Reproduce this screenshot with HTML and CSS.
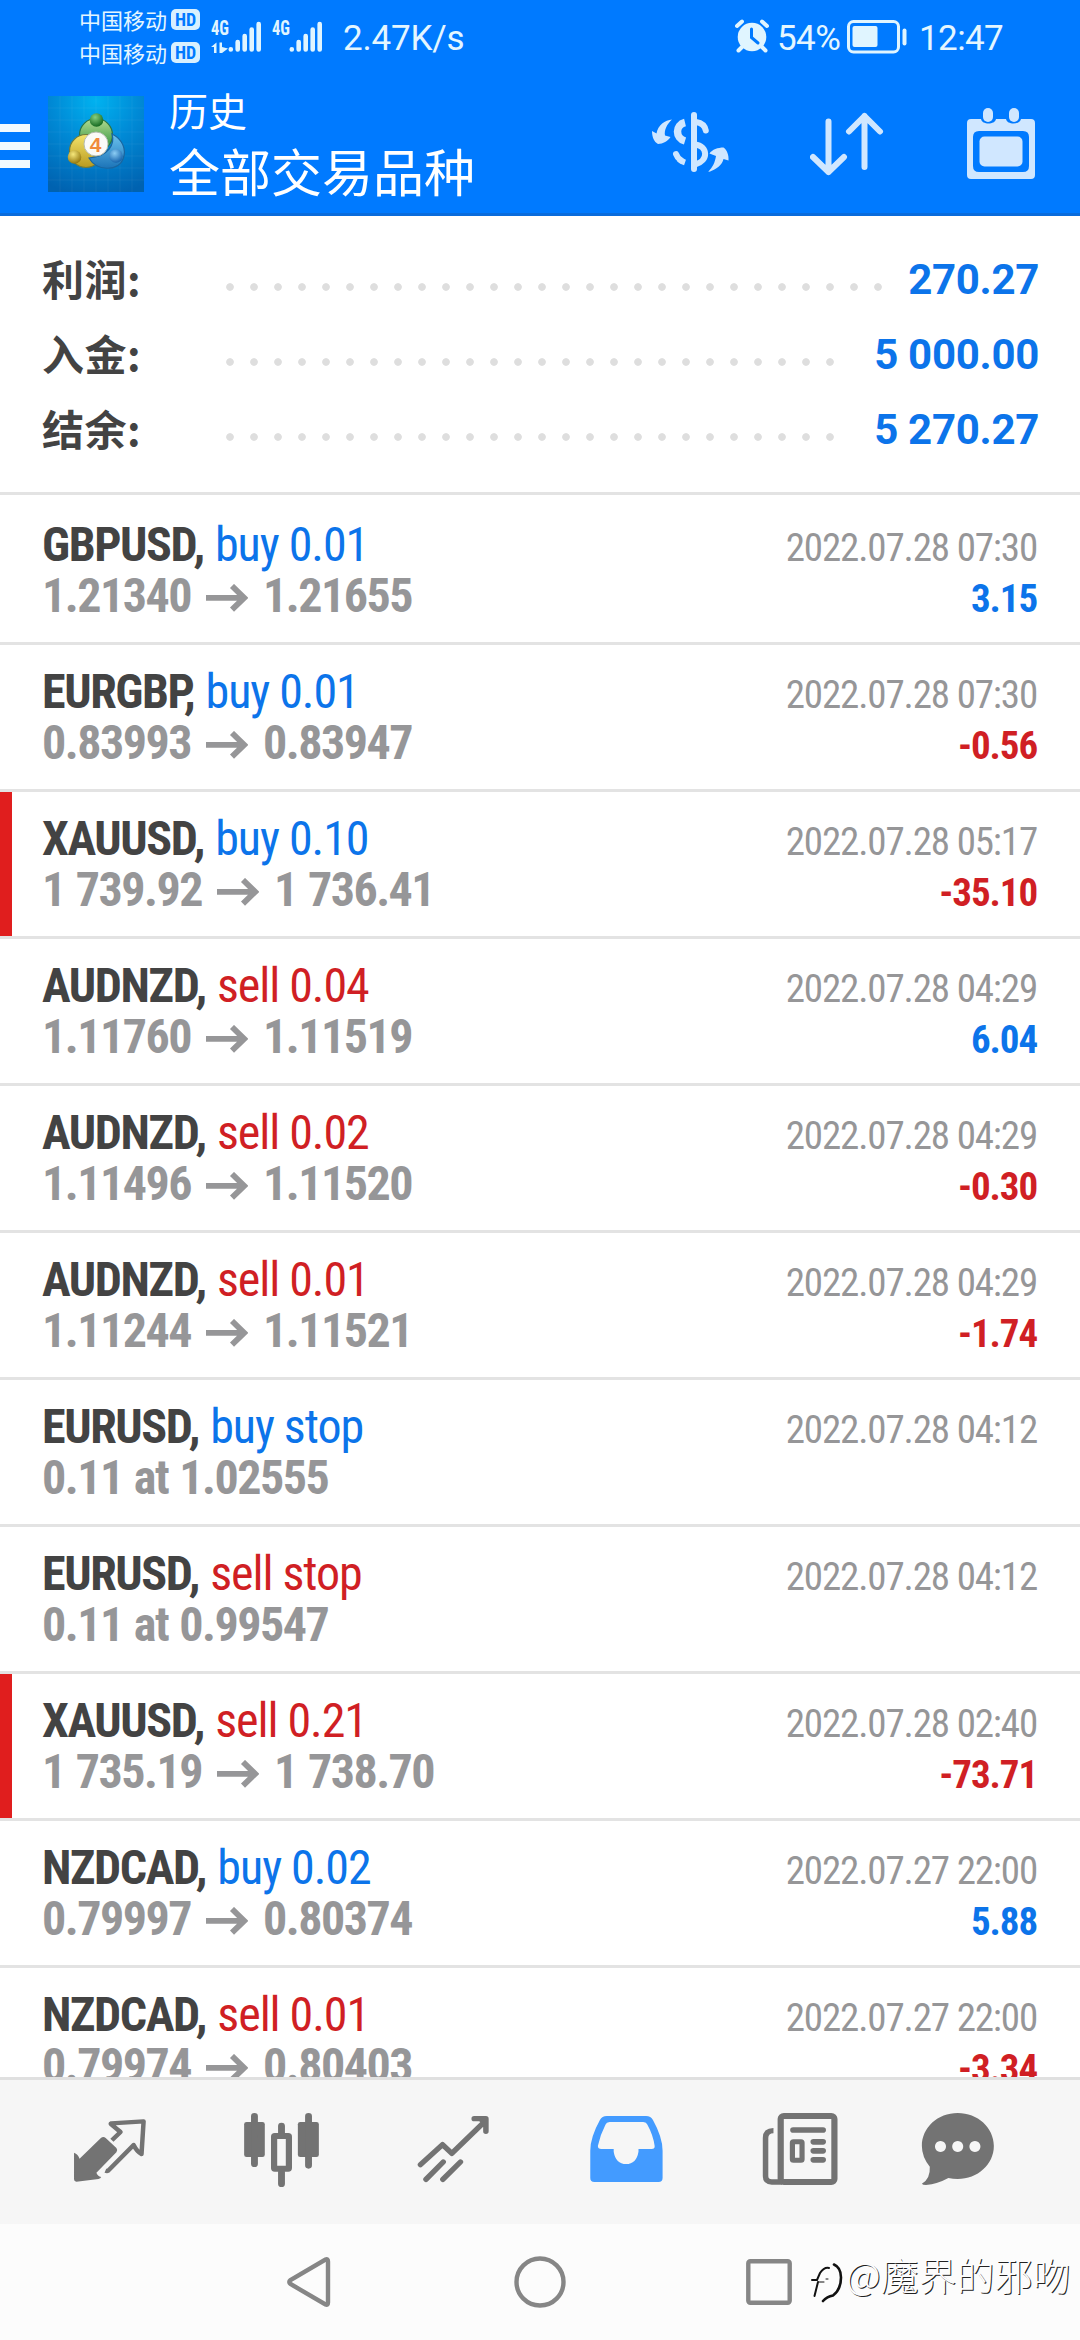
FILE: index.html
```
<!DOCTYPE html>
<html lang="zh-CN">
<head>
<meta charset="utf-8">
<title>历史</title>
<link rel="stylesheet" href="styles.css">
</head>
<body>
<div class="screen">
  <header class="top">
    <div class="status">
      <div class="carriers">
        <div class="carrier">中国移动<span class="hd">HD</span></div>
        <div class="carrier">中国移动<span class="hd">HD</span></div>
      </div>
      <svg class="signal" width="54" height="36" viewBox="0 0 54 36">
        <text class="net" x="0" y="17" textLength="18" lengthAdjust="spacingAndGlyphs">4G</text>
        <path class="fill" d="M0 29l5.500-4.500V35h-2.500v-6zM8.500 24.500H11V29l6 1.500-6 4.500H8.500z"/>
        <path class="bars" d="M19.800 31.500v-.200M26.700 31.500v-7.500M33.700 31.500V18M40.700 31.500V11.500M47.700 31.500V6"/>
      </svg>
      <svg class="signal" width="54" height="36" viewBox="0 0 54 36">
        <text class="net" x="0" y="17" textLength="18" lengthAdjust="spacingAndGlyphs">4G</text>
        <path class="bars" d="M19.800 31.500v-.200M26.700 31.500v-7.500M33.700 31.500V18M40.700 31.500V11.500M47.700 31.500V6"/>
      </svg>
      <span class="speed">2.47K/s</span>
      <svg class="alarm" width="34" height="34" viewBox="0 0 34 34">
        <circle class="fill" cx="17" cy="18" r="14.300"/>
        <path class="ears" d="M2 7l5-4.500M32 7l-5-4.500M7 28l-3.500 3.500M27 28l3.500 3.500"/>
        <path class="hands" d="M16.500 10v8.500l6.500 5.500"/>
      </svg>
      <span class="battery-text">54%</span>
      <svg class="battery" width="60" height="34" viewBox="0 0 60 34">
        <rect class="case" x="1.500" y="1.500" width="50" height="30.500" rx="5"/>
        <rect class="fill" x="5.500" y="6" width="25" height="21" rx="2"/>
        <rect class="fill" x="55.500" y="8.500" width="4" height="17" rx="2"/>
      </svg>
      <span class="clock">12:47</span>
    </div>
    <div class="appbar">
      <div class="burger"><i></i><i></i><i></i></div>
      <svg class="logo" width="96" height="96" viewBox="0 0 96 96">
        <defs>
          <radialGradient id="sky" cx=".5" cy=".05" r="1"><stop offset="0" stop-color="#00b2f0"/><stop offset=".45" stop-color="#008ad6"/><stop offset="1" stop-color="#0062b0"/></radialGradient>
          <linearGradient id="green" x2="0" y2="1"><stop offset="0" stop-color="#b4dc92"/><stop offset="1" stop-color="#238a35"/></linearGradient>
          <linearGradient id="gold" x2="0" y2="1"><stop offset="0" stop-color="#f3e36b"/><stop offset="1" stop-color="#b99a1e"/></linearGradient>
          <linearGradient id="blue" x2="0" y2="1"><stop offset="0" stop-color="#6cc3ee"/><stop offset="1" stop-color="#1c74b8"/></linearGradient>
          <radialGradient id="gball" cx=".4" cy=".3" r=".7"><stop offset="0" stop-color="#86cf80"/><stop offset="1" stop-color="#14691f"/></radialGradient>
          <radialGradient id="yball" cx=".4" cy=".3" r=".7"><stop offset="0" stop-color="#f6e87c"/><stop offset="1" stop-color="#94780e"/></radialGradient>
          <radialGradient id="bball" cx=".4" cy=".3" r=".7"><stop offset="0" stop-color="#8ccdf4"/><stop offset="1" stop-color="#1664ad"/></radialGradient>
        </defs>
        <rect width="96" height="96" fill="url(#sky)"/>
        <path class="grid" d="M12 0v96M24 0v96M36 0v96M48 0v96M60 0v96M72 0v96M84 0v96M0 12h96M0 24h96M0 36h96M0 48h96M0 60h96M0 72h96M0 84h96"/>
        <circle cx="48" cy="39" r="16.500" fill="url(#green)" stroke="#2b7547" stroke-width="1.200"/>
        <circle cx="38" cy="55" r="16.500" fill="url(#gold)" stroke="#6f7b3c" stroke-width="1.200"/>
        <path d="M41 62C48 75 70 76 75 63c4-10-1-20-11-25 3 10-3 22-23 24z" fill="url(#blue)" stroke="#1a659f" stroke-width="1.200"/>
        <circle cx="48.500" cy="24" r="6.800" fill="url(#gball)"/>
        <circle cx="26.500" cy="61" r="6.800" fill="url(#yball)"/>
        <circle cx="68" cy="60" r="6.800" fill="url(#bball)"/>
        <circle cx="48" cy="48" r="12" fill="#fbfbf8" stroke="#b5bdb0"/>
        <text class="four" x="47.500" y="55.500" text-anchor="middle">4</text>
      </svg>
      <div class="titles">
        <div class="title">历史</div>
        <div class="subtitle">全部交易品种</div>
      </div>
      <svg class="ic-dollar" width="80" height="66" viewBox="0 0 80 66">
        <g class="tint">
          <path d="M21 8.500C14 9 7 14 5.500 22.500L1 20C1 26 3 31 7 33 12 33 17 30 19.500 26L14 24.500C13 19 16 13 21 8.500z"/>
          <path d="M57 61C66 58.500 71 54 72.500 48L77.500 49.500C78 44 76 39 72.500 36.500 67 36.500 61 38.500 58.500 42.500L65 45C64 51 62 56 57 61z"/>
        </g>
        <g class="tint-line">
          <path class="w6" d="M43 4v54"/>
          <path class="w6" d="M45 11c6 1 9 4 9.800 8.500"/>
          <path class="w8 butt" d="M34 11.500C24 14 24 27 34 30"/>
          <path class="w6 butt" d="M44 33.500c13 1.500 14 16.500 0 20"/>
          <path class="w6" d="M25 43c1 3 3 5 5 6.500"/>
          <path class="w6 butt" d="M28 48q3 2.500 6 3.500"/>
        </g>
      </svg>
      <svg class="ic-sort" width="74" height="64" viewBox="0 0 74 64">
        <path class="tint-line w6" d="M18.500 9.500V60M3 45l15.500 15L34 45M54.500 55V4M39 19.500L54.500 4 70 19.500"/>
      </svg>
      <svg class="ic-cal" width="68" height="72" viewBox="0 0 68 72">
        <path class="tint" fill-rule="evenodd" d="M4 11h10c1 6 14 6 15 0h10c1 6 14 6 15 0h10q4 0 4 4v52q0 4-4 4H4q-4 0-4-4V15q0-4 4-4zM12 23q-6 0-6 6v29q0 6 6 6h44q6 0 6-6V29q0-6-6-6z"/>
        <rect class="tint" x="12.500" y="28.500" width="43" height="30" rx="5"/>
        <rect class="tint" x="16" y="0" width="10" height="14" rx="5"/>
        <rect class="tint" x="42" y="0" width="10" height="14" rx="5"/>
      </svg>
    </div>
  </header>

  <section class="summary">
    <div class="sum"><span class="label">利润:</span><span class="dots d28"></span><span class="value">270.27</span></div>
    <div class="sum"><span class="label">入金:</span><span class="dots d26"></span><span class="value">5 000.00</span></div>
    <div class="sum"><span class="label">结余:</span><span class="dots d26"></span><span class="value">5 270.27</span></div>
  </section>

  <svg width="0" height="0" class="defs"><symbol id="arrow" viewBox="0 0 42 28"><path d="M0 13.800h38M26 2l12.200 11.800L26 25.600" fill="none" stroke="#969698" stroke-width="5.800"/></symbol></svg>

  <main class="list">
    <div class="deal"><div class="sym">GBPUSD, <span class="buy">buy 0.01</span></div><div class="date">2022.07.28 07:30</div><div class="price">1.21340<svg class="arrow"><use href="#arrow"/></svg>1.21655</div><div class="profit buy">3.15</div></div>
    <div class="deal"><div class="sym">EURGBP, <span class="buy">buy 0.01</span></div><div class="date">2022.07.28 07:30</div><div class="price">0.83993<svg class="arrow"><use href="#arrow"/></svg>0.83947</div><div class="profit sell">-0.56</div></div>
    <div class="deal flag"><div class="sym">XAUUSD, <span class="buy">buy 0.10</span></div><div class="date">2022.07.28 05:17</div><div class="price">1 739.92<svg class="arrow"><use href="#arrow"/></svg>1 736.41</div><div class="profit sell">-35.10</div></div>
    <div class="deal"><div class="sym">AUDNZD, <span class="sell">sell 0.04</span></div><div class="date">2022.07.28 04:29</div><div class="price">1.11760<svg class="arrow"><use href="#arrow"/></svg>1.11519</div><div class="profit buy">6.04</div></div>
    <div class="deal"><div class="sym">AUDNZD, <span class="sell">sell 0.02</span></div><div class="date">2022.07.28 04:29</div><div class="price">1.11496<svg class="arrow"><use href="#arrow"/></svg>1.11520</div><div class="profit sell">-0.30</div></div>
    <div class="deal"><div class="sym">AUDNZD, <span class="sell">sell 0.01</span></div><div class="date">2022.07.28 04:29</div><div class="price">1.11244<svg class="arrow"><use href="#arrow"/></svg>1.11521</div><div class="profit sell">-1.74</div></div>
    <div class="deal"><div class="sym">EURUSD, <span class="buy">buy stop</span></div><div class="date">2022.07.28 04:12</div><div class="price">0.11 at 1.02555</div></div>
    <div class="deal"><div class="sym">EURUSD, <span class="sell">sell stop</span></div><div class="date">2022.07.28 04:12</div><div class="price">0.11 at 0.99547</div></div>
    <div class="deal flag"><div class="sym">XAUUSD, <span class="sell">sell 0.21</span></div><div class="date">2022.07.28 02:40</div><div class="price">1 735.19<svg class="arrow"><use href="#arrow"/></svg>1 738.70</div><div class="profit sell">-73.71</div></div>
    <div class="deal"><div class="sym">NZDCAD, <span class="buy">buy 0.02</span></div><div class="date">2022.07.27 22:00</div><div class="price">0.79997<svg class="arrow"><use href="#arrow"/></svg>0.80374</div><div class="profit buy">5.88</div></div>
    <div class="deal"><div class="sym">NZDCAD, <span class="sell">sell 0.01</span></div><div class="date">2022.07.27 22:00</div><div class="price">0.79974<svg class="arrow"><use href="#arrow"/></svg>0.80403</div><div class="profit sell">-3.34</div></div>
  </main>

  <nav class="tabs">
    <svg viewBox="69.700 360 499.500 432" preserveAspectRatio="none">
      <path class="g" d="M215 578q12 4 16 18l62-62q7-6 14 0l31 30q5 6 0 13l-58 61q3 10 14 13-2 5-8 6l-64 8q-7 0-7-7z"/>
      <path class="gl" stroke-width="13" d="M325 541l25-25-27-23q-3-2 0-3l94-6-6 98q-14-8-23-27l-74 77q-3 2-8 0"/>
    </svg>
    <svg viewBox="569.200 360 499.500 432" preserveAspectRatio="none">
      <rect class="g" x="709" y="486" width="60" height="105" rx="7"/><rect class="g" x="865" y="486" width="61" height="105" rx="7"/>
      <rect class="gl" x="796" y="528" width="43" height="98" rx="2" stroke-width="18"/>
      <path class="gl round" stroke-width="20" d="M739 469v142M896 469v147M817.500 498v24M817.500 636v35"/>
    </svg>
    <svg viewBox="1068.600 360 499.500 432" preserveAspectRatio="none">
      <path class="gl round" stroke-width="16" d="M1221 614l64-60 27 26 96-96M1377 476h34v38M1237 658l50-52M1286 658l51-52"/>
      <path class="g" d="M1385 476h30v32z"/>
    </svg>
    <svg viewBox="0 360 499.500 432" preserveAspectRatio="none">
      <path class="active" fill-rule="evenodd" d="M194 468h114q14 0 20 12 28 52 28 92v82q0 12-12 12H158q-12 0-12-12v-82q0-40 28-92 6-12 20-12zM202 486q-9 0-12 8-16 32-22 64 0 9 10 9h36v8q6 37 36 37t36-37v-8h38q10 0 9-9-4-32-21-64-3-8-12-8z"/>
    </svg>
    <svg viewBox="499.500 360 499.500 432" preserveAspectRatio="none">
      <rect class="gl" x="699" y="468" width="156" height="198" rx="9" stroke-width="18"/>
      <path class="gl" stroke-width="16" d="M678 512q-23 0-23 22v114q0 18 18 18h30"/>
      <path class="gl round" stroke-width="17" d="M735 510h87M794 545.500h28M794 572.500h28M794 599.500h28"/>
      <rect class="gl" x="733" y="545" width="28" height="56" rx="3" stroke-width="15"/>
    </svg>
    <svg viewBox="999 360 499.500 432" preserveAspectRatio="none">
      <path class="g" fill-rule="evenodd" d="M1213 459c58 0 105 44 105 99s-47 99-105 99q-14 0-27-3-32 18-65 21-10 0-12-4 25-15 23-51-23-29-23-62c0-55 46-99 104-99zM1163 543a16 16.500 0 1 0 .1 0zM1213 543a16 16.500 0 1 0 .1 0zM1263 543a16 16.500 0 1 0 .1 0z"/>
    </svg>
  </nav>

  <footer class="sysnav">
    <svg class="back" width="46" height="52" viewBox="0 0 46 52"><path d="M38.500 3.500Q41 2.500 41 5.500v41Q41 49.500 38.500 48.500L3.500 28Q1 26 3.500 24z"/></svg>
    <svg class="home" width="52" height="52" viewBox="0 0 52 52"><circle cx="26" cy="26" r="23.500"/></svg>
    <svg class="recent" width="46" height="46" viewBox="0 0 46 46"><rect x="2.300" y="2.300" width="41.400" height="41.400" rx="2"/></svg>
  </footer>

  <div class="watermark">
    <svg width="34" height="42" viewBox="0 0 34 42">
      <path class="ink" stroke-width="2" d="M4.500 34L8 20M2 18h5l3-7q4-6 9-5"/>
      <path class="ink" stroke-width="2.600" d="M24 2.500q7 3 7 13 0 12-8 18-6 1-10 5.500"/>
      <path class="ink" stroke-width="1" d="M9 20h5M16 17h2"/>
    </svg>
    <span>@魔界的邪吻</span>
  </div>
</div>
</body>
</html>
```
FILE: styles.css
```
* { box-sizing: border-box; }
body { margin: 0; background: #fff; }
svg { display: block; flex: none; }
.defs { display: none; }

.screen {
  position: relative;
  display: flex;
  flex-direction: column;
  width: 1080px;
  height: 2340px;
  overflow: hidden;
  background: #fff;
  font-family: Roboto, "Noto Sans CJK SC", sans-serif;
}

/* Header */
.top {
  height: 216px;
  flex: none;
  background: #007aff;
  border-bottom: 3px solid #0a6cdc;
  color: #e4f6ff;
}
.status {
  display: flex;
  align-items: flex-start;
  height: 72px;
  padding-left: 79px;
}
.carriers {
  width: 132px;
  padding-top: 3px;
  font: 22px/33px "Noto Sans CJK SC", sans-serif;
}
.carrier { display: flex; align-items: center; height: 33px; }
.hd {
  width: 29px;
  height: 21px;
  margin-left: 4px;
  border-radius: 5px;
  background: #d8f0ff;
  color: #007aff;
  font: 700 18px/21px "Roboto Condensed", sans-serif;
  text-align: center;
}
.signal { width: 54px; margin: 18px 7px 0 0; }
.net { font: 700 20px "Roboto Condensed", sans-serif; fill: #e0f5ff; }
.fill { fill: #e0f5ff; }
.bars { stroke: #e0f5ff; stroke-width: 4.6; stroke-linecap: round; fill: none; }
.speed, .battery-text, .clock { font-size: 35px; line-height: 41px; margin-top: 18px; white-space: nowrap; }
.speed { width: 124px; margin-left: 10px; letter-spacing: -.2px; }
.alarm { margin: 19px 0 0 268px; }
.ears { stroke: #e0f5ff; stroke-width: 4; stroke-linecap: round; }
.hands { stroke: #007aff; stroke-width: 3; fill: none; stroke-linecap: round; }
.battery-text { width: 70px; margin-left: 8px; letter-spacing: -.6px; }
.battery { margin-top: 20px; }
.case { fill: none; stroke: #e0f5ff; stroke-width: 3; }
.clock { margin-left: 12px; letter-spacing: -.6px; }

.appbar { display: flex; height: 141px; }
.burger { display: flex; flex-direction: column; gap: 10px; width: 30px; padding-top: 52px; }
.burger i { height: 8px; background: #f2faff; }
.logo { margin: 24px 0 0 18px; }
.grid { stroke: #fff; stroke-opacity: .05; fill: none; }
.four { font: 700 21px "Liberation Sans", sans-serif; fill: #f08a3c; }
.titles { width: 306px; margin-left: 25px; color: #fff; font-family: "Noto Sans CJK SC", sans-serif; white-space: nowrap; }
.title { font-size: 39px; line-height: 50px; margin-top: 12px; }
.subtitle { font-size: 51px; line-height: 60px; margin-top: 6px; }
.tint { fill: #d0e7ff; }
.tint-line { fill: none; stroke: #d0e7ff; stroke-linecap: round; stroke-linejoin: round; }
.w6 { stroke-width: 6; }
.w8 { stroke-width: 7.5; }
.butt { stroke-linecap: butt; }
.ic-dollar { margin: 39px 0 0 176px; }
.ic-sort { margin: 40px 0 0 79px; }
.ic-cal { margin: 36px 0 0 83px; }

/* Account summary */
.summary {
  flex: none;
  height: 279px;
  padding: 27px 41px 0 42px;
  border-bottom: 3px solid #e3e3e3;
}
.sum { display: flex; align-items: center; height: 75px; font-weight: 700; font-size: 42px; line-height: 50px; }
.label { width: 184px; margin-top: -6px; color: #434343; font-family: "Noto Sans CJK SC", sans-serif; letter-spacing: .5px; }
.dots {
  height: 8px;
  margin-top: 13px;
  background: radial-gradient(circle at 4px 4px, #dedede 3.4px, transparent 4.2px) 0 0 / 24px 8px repeat-x;
}
.d28 { width: 656px; }
.d26 { width: 608px; }
.value { margin-left: auto; margin-top: -1px; color: #0c74ea; white-space: nowrap; letter-spacing: -.3px; }

/* Deals */
.list { flex: none; height: 1582px; padding-top: 3px; overflow: hidden; }
.deal {
  display: grid;
  grid-template-columns: 1fr auto;
  grid-template-rows: 51px 51px;
  align-items: baseline;
  height: 147px;
  padding: 21px 43px 0 42px;
  border-bottom: 3px solid #e3e3e3;
  font: 48px/51px "Roboto Condensed", Roboto, sans-serif;
  white-space: nowrap;
}
.flag { background: linear-gradient(#e01e1e, #e01e1e) 0 0 / 12px 100% no-repeat; }
.sym { color: #434343; font-weight: 700; letter-spacing: -1.4px; }
.sym span { margin-left: 1.5px; font-weight: 400; letter-spacing: -1.05px; }
.buy { color: #0c74ea; }
.sell { color: #d01f24; }
.date { color: #969698; font-size: 39px; letter-spacing: -1.15px; }
.price { color: #969698; font-weight: 700; letter-spacing: -1.5px; word-spacing: 1.5px; }
.arrow { display: inline-block; width: 42px; height: 28px; margin: 0 15px 0 15px; vertical-align: 0; }
.profit { font-size: 39px; font-weight: 700; text-align: right; letter-spacing: -1.1px; }

/* Tab bar */
.tabs {
  display: flex;
  flex: none;
  height: 147px;
  padding: 0 24px;
  border-top: 3px solid #e0e0e0;
  background: #f6f6f6;
}
.tabs svg { width: 172px; height: 144px; }
.g { fill: #737373; }
.gl { fill: none; stroke: #737373; stroke-linejoin: round; }
.round { stroke-linecap: round; }
.active { fill: #439bff; }

/* System navigation */
.sysnav { display: flex; flex: 1; padding: 32px 0 0 287px; background: #fcfcfc; fill: none; stroke: #868686; stroke-width: 4.4; }
.home { margin-left: 181px; }
.recent { margin: 3px 0 0 180px; }

.watermark {
  position: absolute;
  left: 810px;
  top: 2262px;
  display: flex;
  gap: 2px;
  color: #fdfdfd;
  font: 300 38px/42px "Noto Sans CJK SC", sans-serif;
  text-shadow: 1px 1px 0 #222;
  white-space: nowrap;
}
.watermark span { margin-top: -9px; }
.ink { fill: none; stroke: #111; stroke-linecap: round; }
```
